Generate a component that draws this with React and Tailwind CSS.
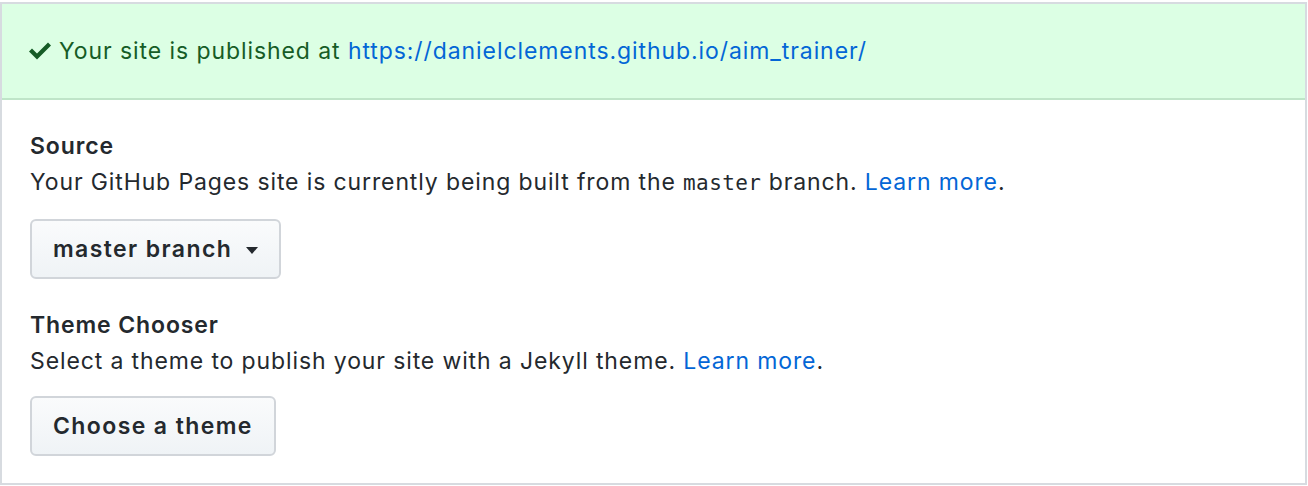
import React from "react";

const CheckIcon = () => (
  <svg width="22" height="18" viewBox="0 0 22 18" className="shrink-0" fill="currentColor">
    <path d="M19 0.5L22 3.5L8 17.5L0 9.5L3 6.5L8 11.5Z" />
  </svg>
);

const Button = ({ children, caret }) => (
  <button
    type="button"
    className="flex items-center gap-[14px] rounded-md border-2 border-[#d1d5da] bg-gradient-to-b from-[#fafbfc] to-[#eff3f6] px-[21px] text-[23px] font-semibold leading-[56px] tracking-[1.4px] text-[#24292e]"
  >
    {children}
    {caret && (
      <span className="mt-[2px] h-0 w-0 border-x-[6px] border-t-[7px] border-x-transparent border-t-[#24292e]" />
    )}
  </button>
);

const App = () => {
  return (
    <main
      className="h-[486px] bg-white pt-[2px]"
      style={{ fontFamily: "Inter, 'Liberation Sans', sans-serif" }}
    >
      <section className="h-[483px] w-[1307px] border-2 border-[#d7dbe0] bg-white">
        <div className="flex h-[96px] items-center gap-[8px] border-b-2 border-[#bfe5c8] bg-[#dcffe4] pl-[27px] text-[23px] tracking-[0.92px] text-[#165c26]">
          <CheckIcon />
          <span>
            Your site is published at{" "}
            <a href="#" className="text-[#0366d6]">
              https://danielclements.github.io/aim_trainer/
            </a>
          </span>
        </div>

        <div className="px-[28px] pt-[29px] text-[23px] tracking-[0.88px] text-[#24292e]">
          <h2 className="font-semibold leading-[35px]">Source</h2>
          <p className="leading-[36px]">
            Your GitHub Pages site is currently being built from the{" "}
            <code
              className="text-[21px] tracking-[0.4px]"
              style={{ fontFamily: "'DejaVu Sans Mono', monospace" }}
            >
              master
            </code>{" "}
            branch.{" "}
            <a href="#" className="text-[#0366d6]">
              Learn more
            </a>
            .
          </p>
          <div className="mt-[18px]">
            <Button caret>master branch</Button>
          </div>

          <h2 className="mt-[29px] font-semibold leading-[35px]">Theme Chooser</h2>
          <p className="leading-[36px]">
            Select a theme to publish your site with a Jekyll theme.{" "}
            <a href="#" className="text-[#0366d6]">
              Learn more
            </a>
            .
          </p>
          <div className="mt-[17px]">
            <Button>Choose a theme</Button>
          </div>
        </div>
      </section>
    </main>
  );
};

export default App;
